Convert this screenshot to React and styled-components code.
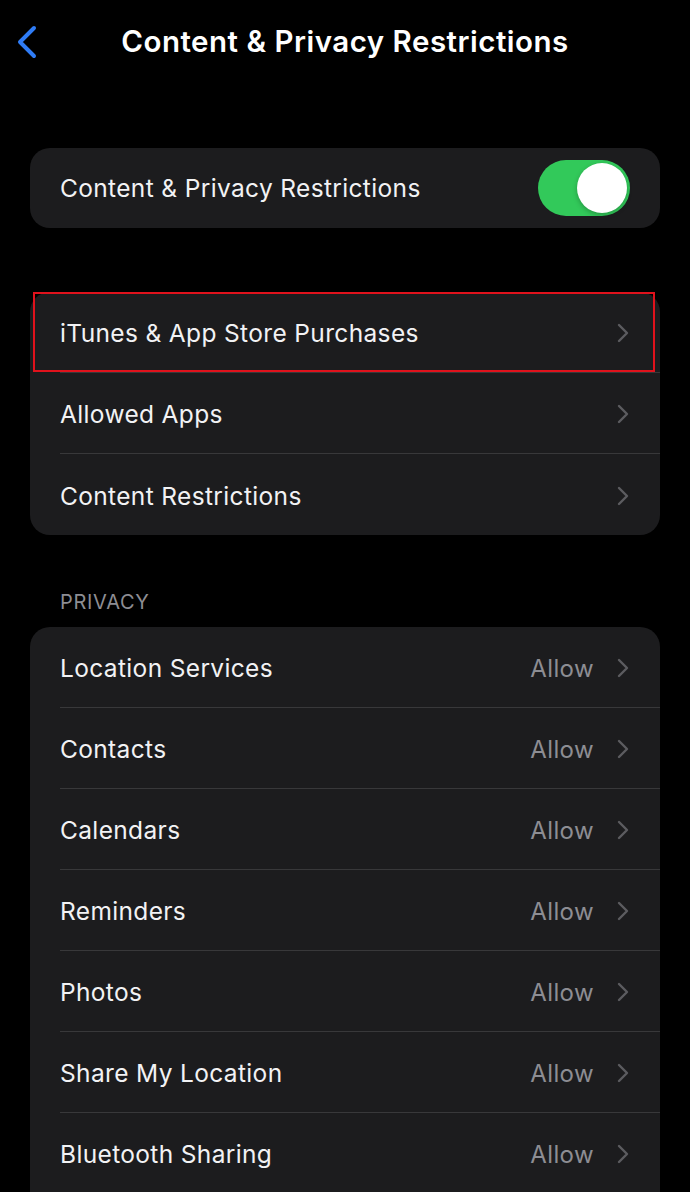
import styled, { createGlobalStyle } from "styled-components";

const GlobalStyle = createGlobalStyle`
    html, body {
        margin: 0;
        padding: 0;
        background: #000;
    }
    body {
        font-family: "Inter", "Liberation Sans", sans-serif;
        color: #fff;
        -webkit-font-smoothing: antialiased;
    }
`;

const generalRows = [
    { id: "itunes", title: "iTunes & App Store Purchases", highlighted: true },
    { id: "apps", title: "Allowed Apps" },
    { id: "content", title: "Content Restrictions" },
];

const privacyRows = [
    "Location Services",
    "Contacts",
    "Calendars",
    "Reminders",
    "Photos",
    "Share My Location",
    "Bluetooth Sharing",
];

function Chevron() {
    return (
        <svg width="12" height="20" viewBox="0 0 12 20" fill="none">
            <path d="M2 2l8 8-8 8" stroke="#5c5c60" strokeWidth="2.4" strokeLinecap="round" strokeLinejoin="round" />
        </svg>
    );
}

function BackChevron() {
    return (
        <svg width="22" height="34" viewBox="0 0 22 34" fill="none">
            <path d="M18 3L4 17l14 14" stroke="#2f7cf6" strokeWidth="4" strokeLinecap="round" strokeLinejoin="round" />
        </svg>
    );
}

function Row({ title, value, highlighted, last }) {
    return (
        <RowBox $last={last}>
            <Label>{title}</Label>
            <Trail>
                {value && <Value>{value}</Value>}
                <Chevron />
            </Trail>
            {highlighted && <Highlight />}
        </RowBox>
    );
}

export default function App() {
    return (
        <Screen>
            <GlobalStyle />
            <NavBar>
                <BackButton>
                    <BackChevron />
                </BackButton>
                <Title>Content &amp; Privacy Restrictions</Title>
            </NavBar>

            <Card $top={66}>
                <ToggleRow>
                    <Label>Content &amp; Privacy Restrictions</Label>
                    <Switch>
                        <Knob />
                    </Switch>
                </ToggleRow>
            </Card>

            <Card $top={64}>
                {generalRows.map((row, i) => (
                    <Row
                        key={row.id}
                        title={row.title}
                        highlighted={row.highlighted}
                        last={i === generalRows.length - 1}
                    />
                ))}
            </Card>

            <SectionHeader>PRIVACY</SectionHeader>
            <Card $top={0} $open>
                {privacyRows.map((name) => (
                    <Row key={name} title={name} value="Allow" />
                ))}
            </Card>
        </Screen>
    );
}

const Screen = styled.div`
    width: 690px;
    min-height: 1192px;
    padding: 0 30px;
    box-sizing: border-box;
    background: #000;
    overflow: hidden;
`;

const NavBar = styled.header`
    position: relative;
    height: 82px;
    display: flex;
    align-items: center;
    justify-content: center;
`;

const BackButton = styled.div`
    position: absolute;
    left: -14px;
    top: 25px;
    display: flex;
`;

const Title = styled.h1`
    margin: 0;
    font-size: 29.5px;
    font-weight: 600;
    letter-spacing: 0.5px;
    color: #fff;
`;

const Card = styled.section`
    margin-top: ${(p) => p.$top}px;
    background: #1c1c1e;
    border-radius: ${(p) => (p.$open ? "20px 20px 0 0" : "20px")};
`;

const ToggleRow = styled.div`
    height: 80px;
    display: flex;
    align-items: center;
    justify-content: space-between;
    padding: 0 30px;
`;

const Switch = styled.div`
    width: 92px;
    height: 56px;
    border-radius: 28px;
    background: #32c95a;
    display: flex;
    align-items: center;
    justify-content: flex-end;
    padding: 0 3px;
    box-sizing: border-box;
`;

const Knob = styled.div`
    width: 50px;
    height: 50px;
    border-radius: 50%;
    background: #fff;
    box-shadow: 0 2px 5px rgba(0, 0, 0, 0.25);
`;

const RowBox = styled.div`
    position: relative;
    height: 81px;
    margin-left: 30px;
    padding: 2px 31px 0 0;
    display: flex;
    align-items: center;
    justify-content: space-between;
    box-sizing: border-box;
    border-bottom: ${(p) => (p.$last ? "none" : "1px solid #38383a")};
`;

const Label = styled.span`
    font-size: 24.5px;
    font-weight: 400;
    letter-spacing: 0.35px;
    color: #f2f2f4;
`;

const Trail = styled.div`
    display: flex;
    align-items: center;
    gap: 23px;
`;

const Value = styled.span`
    font-size: 24px;
    color: #8d8d93;
    letter-spacing: 0.4px;
`;

const Highlight = styled.div`
    position: absolute;
    left: -27px;
    right: 5px;
    top: 0;
    bottom: 0;
    border: 2px solid #e0121c;
    pointer-events: none;
`;

const SectionHeader = styled.div`
    margin-top: 55px;
    padding-left: 30px;
    height: 37px;
    line-height: 24px;
    font-size: 20px;
    color: #8d8d93;
    letter-spacing: 0.7px;
`;
